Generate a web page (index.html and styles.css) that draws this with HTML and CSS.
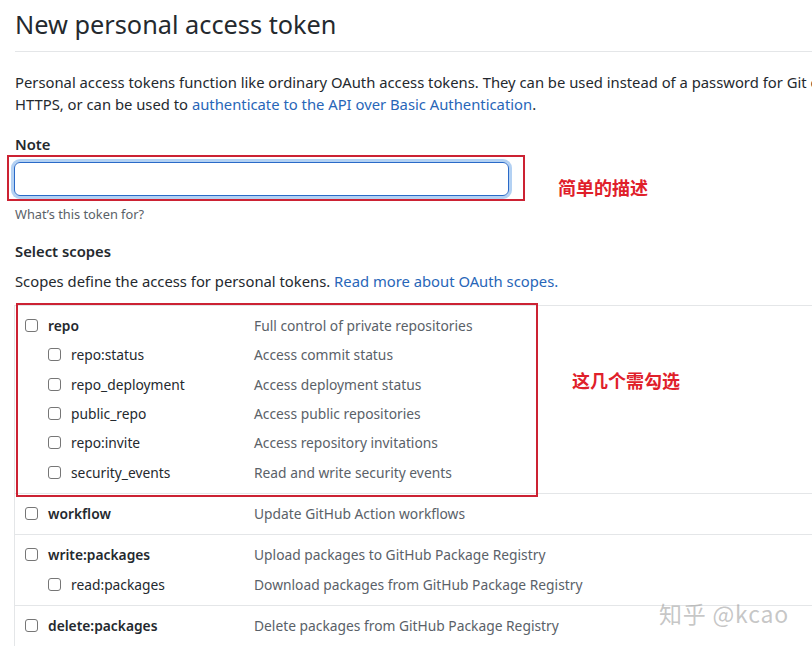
FILE: index.html
```html
<!DOCTYPE html>
<html>
<head>
<meta charset="utf-8">
<link rel="stylesheet" href="styles.css">
</head>
<body>
<div class="page">
  <h1 class="title">New personal access token</h1>
  <p class="intro">Personal access tokens function like ordinary OAuth access tokens. They can be used instead of a password for Git over HTTPS, or can be used to <a class="link">authenticate to the API over Basic Authentication</a>.</p>

  <div class="field">
    <div class="label">Note</div>
    <div class="input"></div>
    <div class="hint">What’s this token for?</div>
  </div>

  <div class="label scopes-title">Select scopes</div>
  <p class="scopes-desc">Scopes define the access for personal tokens. <a class="link">Read more about OAuth scopes.</a></p>

  <div class="scopes">
    <div class="group">
      <div class="row"><span class="name main"><span class="cb"></span>repo</span><span class="desc">Full control of private repositories</span></div>
      <div class="row"><span class="name sub"><span class="cb"></span>repo:status</span><span class="desc">Access commit status</span></div>
      <div class="row"><span class="name sub"><span class="cb"></span>repo_deployment</span><span class="desc">Access deployment status</span></div>
      <div class="row"><span class="name sub"><span class="cb"></span>public_repo</span><span class="desc">Access public repositories</span></div>
      <div class="row"><span class="name sub"><span class="cb"></span>repo:invite</span><span class="desc">Access repository invitations</span></div>
      <div class="row"><span class="name sub"><span class="cb"></span>security_events</span><span class="desc">Read and write security events</span></div>
    </div>
    <div class="group">
      <div class="row"><span class="name main"><span class="cb"></span>workflow</span><span class="desc">Update GitHub Action workflows</span></div>
    </div>
    <div class="group">
      <div class="row"><span class="name main"><span class="cb"></span>write:packages</span><span class="desc">Upload packages to GitHub Package Registry</span></div>
      <div class="row"><span class="name sub"><span class="cb"></span>read:packages</span><span class="desc">Download packages from GitHub Package Registry</span></div>
    </div>
    <div class="group">
      <div class="row"><span class="name main"><span class="cb"></span>delete:packages</span><span class="desc">Delete packages from GitHub Package Registry</span></div>
    </div>
  </div>
</div>

<div class="mark mark-note"></div>
<div class="mark mark-scopes"></div>
<div class="annot annot-note">简单的描述</div>
<div class="annot annot-scopes">这几个需勾选</div>
<div class="watermark">知乎 @kcao</div>
</body>
</html>
```

FILE: styles.css
```css
html, body {
  margin: 0;
  padding: 0;
  background: #fff;
  overflow: hidden;
  width: 812px;
  height: 646px;
}
body {
  position: relative;
  font-family: "Noto Sans", "Open Sans", sans-serif;
  color: #24292e;
  font-size: 14.8px;
}
.page {
  width: 900px;
  padding-left: 15px;
}
.title {
  margin: 0;
  padding-top: 6px;
  padding-bottom: 9px;
  font-size: 25.3px;
  font-weight: 400;
  line-height: 36px;
  border-bottom: 1px solid #e4e6e8;
}
.intro {
  margin: 19px 0 0;
  line-height: 22px;
  width: 860px;
}
.link {
  color: #2866b8;
  text-decoration: none;
}
.field {
  margin-top: 19px;
}
.label {
  font-weight: 600;
  line-height: 20px;
}
.input {
  margin-top: 8px;
  margin-left: -1px;
  width: 493px;
  height: 32px;
  border: 1px solid #2a6ac8;
  border-radius: 6px;
  box-shadow: 0 0 0 3px rgba(3, 102, 214, 0.3);
}
.hint {
  margin-top: 9px;
  font-size: 12.8px;
  color: #5a6168;
  line-height: 18px;
}
.scopes-title {
  margin-top: 18px;
}
.scopes-desc {
  margin: 9px 0 0;
  line-height: 22px;
}
.scopes {
  margin-top: 13px;
  border-top: 1px solid #e4e6e8;
  border-left: 1px solid #e4e6e8;
  margin-left: -1px;
  font-size: 13.8px;
}
.group {
  padding: 5px 0 6px;
  border-bottom: 1px solid #e4e6e8;
}
.row {
  display: flex;
  align-items: center;
  height: 29.3px;
}
.name {
  display: flex;
  align-items: center;
  width: 239px;
  padding-left: 10px;
  box-sizing: border-box;
  flex-shrink: 0;
}
.name.main {
  font-weight: 600;
}
.name.sub {
  padding-left: 33px;
}
.cb {
  width: 11px;
  height: 11px;
  border: 1px solid #767676;
  border-radius: 3px;
  margin-right: 10px;
  flex-shrink: 0;
}
.desc {
  color: #5a6168;
}
.mark {
  position: absolute;
  border: 2px solid #cc2233;
  box-sizing: border-box;
}
.mark-note {
  left: 7px;
  top: 155px;
  width: 518px;
  height: 46px;
}
.mark-scopes {
  left: 16px;
  top: 303px;
  width: 522px;
  height: 194px;
}
.annot {
  position: absolute;
  color: #e0202a;
  font-weight: 700;
  font-size: 18px;
  font-family: "Noto Sans CJK SC", sans-serif;
}
.annot-note {
  left: 558px;
  top: 174px;
}
.annot-scopes {
  left: 572px;
  top: 367px;
}
.watermark {
  position: absolute;
  left: 659px;
  top: 596px;
  font-size: 23px;
  color: rgba(150, 150, 150, 0.55);
  font-family: "Noto Sans CJK SC", sans-serif;
  letter-spacing: 0.8px;
}
```
